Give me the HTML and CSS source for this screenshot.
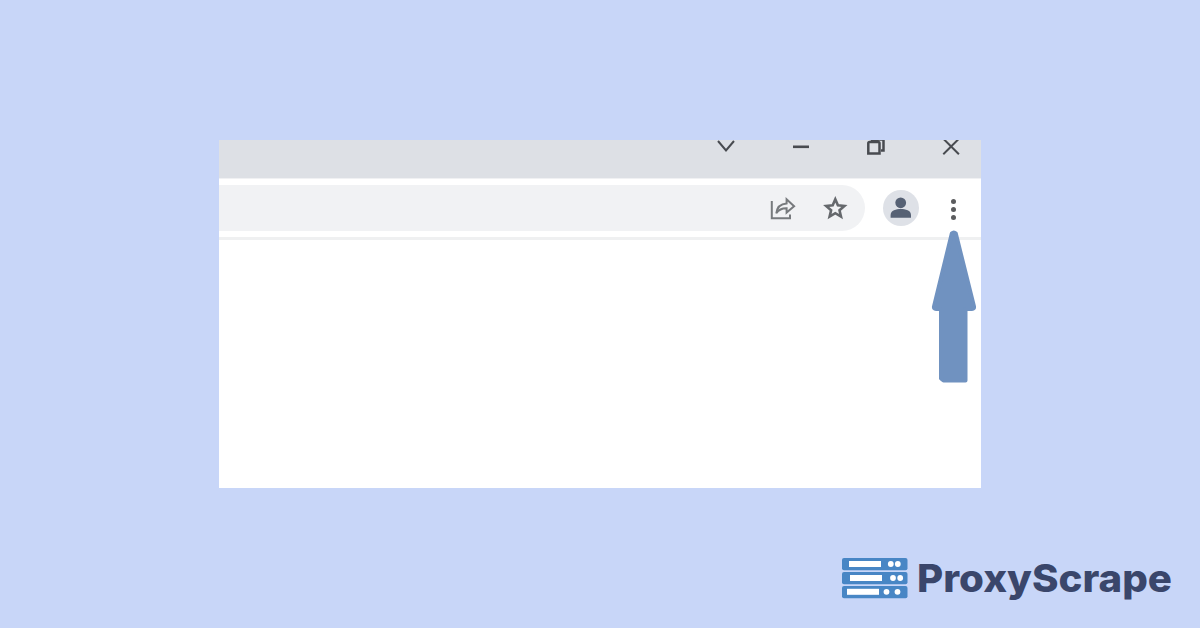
FILE: index.html
```html
<!DOCTYPE html>
<html lang="en">
<head>
    <meta charset="UTF-8">
    <meta name="viewport" content="width=device-width, initial-scale=1.0">
    <title>ProxyScrape</title>
    <link rel="stylesheet" href="styles.css">
</head>
<body>
    <div class="browser">
        <div class="titlebar">
            <svg viewBox="0 0 24 24"><path d="M4 7l8 9.500 8-9.500"/></svg>
            <svg viewBox="0 0 24 24"><path d="M4 12.800h16" stroke-width="2.600"/></svg>
            <svg viewBox="0 0 24 24"><path d="M8 7V5.500h10.500q1 0 1 1V16.500H17M4.300 9.200q0-1.300 1.300-1.300h8.600q1.300 0 1.300 1.300v10.200H4.300z" stroke-width="2.500"/></svg>
            <svg viewBox="0 0 24 24"><path d="M4.300 4.700l15.600 15.600M19.900 4.700L4.300 20.300"/></svg>
        </div>
        <div class="toolbar">
            <div class="omnibox">
                <svg class="share" viewBox="0 0 28 28"><path d="M2.800 7v17.200H21V20.500M7.300 19.300C8 13 11 9.800 17.600 9.400V5.300l7.500 6.900-7.500 6.400v-4.300c-5-.1-7.700 1.200-10.300 5z"/></svg>
                <svg class="star" viewBox="0 0 28 28"><path d="M14.300 5.300l2.600 6 6.500.6-4.900 4.300 1.500 6.400-5.700-3.400-5.700 3.400 1.500-6.400-4.900-4.300 6.500-.6z"/></svg>
            </div>
            <div class="avatar">
                <svg viewBox="0 0 36 36"><circle cx="17.700" cy="12.800" r="5.400"/><path d="M7.600 27.700V25c0-4.600 5.600-6 10.200-6s10.200 1.400 10.200 6v2.700z"/></svg>
            </div>
            <div class="menu">
                <span></span>
                <span></span>
                <span></span>
            </div>
        </div>
        <div class="content">
            <svg class="arrow" viewBox="0 0 46 154"><path d="M20.800 3.500q2-2 4 0L43 76.500q.5 2.500-2 2.500h-6.500V150.500H12.500l-2.500-2V79H5q-2.500 0-2-2.500z"/></svg>
        </div>
    </div>
    <div class="logo">
        <svg class="servers" viewBox="0 0 66 42">
            <g fill="#4886c5">
                <rect x="0" y="0" width="65.500" height="12.300" rx="2"/>
                <rect x="0" y="14" width="65.500" height="12.300" rx="2"/>
                <rect x="0" y="28" width="65.500" height="12.300" rx="2"/>
            </g>
            <g fill="#fff">
                <rect x="7" y="3" width="32" height="6"/>
                <rect x="8" y="17" width="32" height="6"/>
                <rect x="5" y="30.800" width="32" height="6"/>
                <circle cx="48.800" cy="6" r="2.900"/>
                <circle cx="55.800" cy="6" r="2.900"/>
                <circle cx="51" cy="20" r="2.900"/>
                <circle cx="58.200" cy="20" r="2.900"/>
                <circle cx="44.500" cy="33.800" r="2.900"/>
                <circle cx="55.500" cy="33.800" r="2.900"/>
            </g>
        </svg>
        <svg class="wordmark" viewBox="0 0 258 50">
            <text x="0" y="37" textLength="255" lengthAdjust="spacingAndGlyphs">ProxyScrape</text>
        </svg>
    </div>
</body>
</html>
```
FILE: styles.css
```css
body {
    margin: 0;
    height: 628px;
    box-sizing: border-box;
    padding-top: 140px;
    display: flex;
    flex-direction: column;
    align-items: center;
    background: #c8d6f8;
    font-family: Inter, sans-serif;
    overflow: hidden;
}
svg {
    display: block;
}
.browser {
    width: 762px;
    height: 348px;
    background: #fff;
    overflow: hidden;
}
.titlebar {
    height: 38px;
    display: flex;
    justify-content: flex-end;
    gap: 51px;
    padding-right: 18px;
    background: #dde0e5;
    border-bottom: 1px solid #f0f1f3;
}
.titlebar svg {
    width: 24px;
    height: 24px;
    margin-top: -6px;
    fill: none;
    stroke: #484b50;
    stroke-width: 2;
}
.toolbar {
    height: 58px;
    display: flex;
    align-items: center;
    border-bottom: 3px solid #eff0f1;
}
.omnibox {
    width: 646px;
    height: 46px;
    box-sizing: border-box;
    display: flex;
    align-items: center;
    justify-content: flex-end;
    gap: 24px;
    padding-right: 16px;
    background: #f1f2f4;
    border-radius: 0 23px 23px 0;
}
.omnibox svg {
    width: 28px;
    height: 28px;
    fill: none;
    stroke: #777a7d;
    stroke-width: 2;
}
.omnibox .star {
    stroke: #65686c;
    stroke-width: 2.6;
}
.avatar {
    width: 36px;
    height: 36px;
    margin-left: 18px;
    border-radius: 50%;
    background: #dee1e7;
}
.avatar svg {
    width: 36px;
    height: 36px;
    fill: #566174;
}
.menu {
    display: flex;
    flex-direction: column;
    gap: 3px;
    margin: 2px 0 0 32px;
}
.menu span {
    width: 5px;
    height: 5px;
    border-radius: 50%;
    background: #5b5c5e;
}
.content {
    display: flex;
    justify-content: flex-end;
    padding-right: 4px;
}
.arrow {
    width: 46px;
    height: 154px;
    margin-top: -10px;
    fill: #7092c0;
    stroke: #7092c0;
    stroke-width: 4;
    stroke-linejoin: round;
}
.logo {
    align-self: flex-end;
    display: flex;
    margin: 70px 25px 0 0;
}
.servers {
    width: 66px;
    height: 42px;
}
.wordmark {
    width: 258px;
    height: 50px;
    margin: -3px 0 0 9px;
    fill: #3a466b;
    font-size: 38.5px;
    font-weight: 800;
}
```
